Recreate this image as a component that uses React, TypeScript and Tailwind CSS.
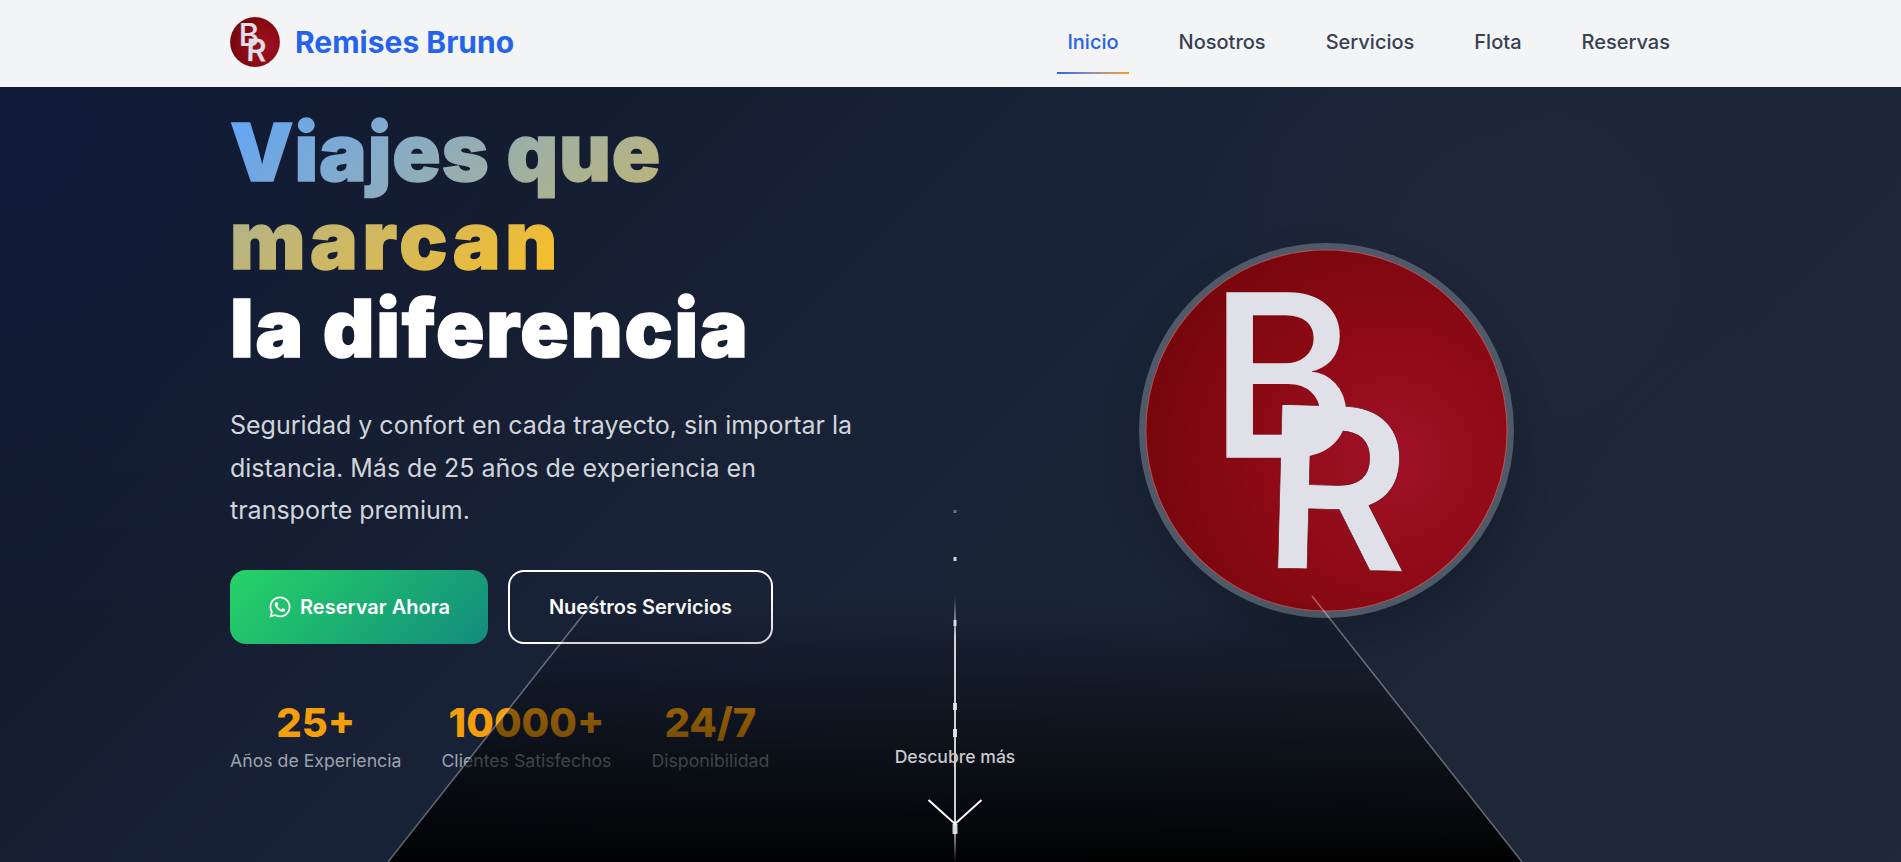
import { FaWhatsapp } from "react-icons/fa";

const links = ["Inicio", "Nosotros", "Servicios", "Flota", "Reservas"];

const stats = [
  { value: "25+", label: "Años de Experiencia" },
  { value: "10000+", label: "Clientes Satisfechos" },
  { value: "24/7", label: "Disponibilidad" },
];

const dashes = [
  { top: "top-[423px]", size: "w-[3px] h-[3px]", tone: "opacity-40" },
  { top: "top-[470px]", size: "w-[3px] h-[4px]", tone: "opacity-90" },
  { top: "top-[533px]", size: "w-[3px] h-[6px]", tone: "opacity-90" },
  { top: "top-[616px]", size: "w-[4px] h-[7px]", tone: "opacity-90" },
  { top: "top-[642px]", size: "w-[4px] h-[8px]", tone: "opacity-90" },
  { top: "top-[737px]", size: "w-[5px] h-[10px]", tone: "opacity-90" },
];

const BrLogo = ({ id }: { id: string }) => (
  <svg viewBox="0 0 100 100" className="block w-full h-full overflow-visible">
    <defs>
      <radialGradient id={id} cx="0.68" cy="0.58" r="0.7">
        <stop offset="0" stopColor="#a11229" />
        <stop offset="0.5" stopColor="#8e0a15" />
        <stop offset="1" stopColor="#76060c" />
      </radialGradient>
    </defs>
    <circle cx="50" cy="50" r="49.8" fill={`url(#${id})`} stroke="#d98892" strokeOpacity="0.55" strokeWidth="0.4" />
    <g fontFamily="Inter, sans-serif" fontSize="62">
      <text transform="translate(32 87.8) rotate(1.5)" fill="#e0e1e8" stroke="#6b1018" strokeWidth="0.2" fontWeight="600">R</text>
      <text transform="translate(17.6 57.3)" fill="#e0e1e8" stroke="#e0e1e8" strokeWidth="0.4" fontWeight="500">B</text>
    </g>
  </svg>
);

export default function App() {
  return (
    <div className="relative flex flex-col h-screen overflow-hidden font-['Inter',sans-serif]">
      <nav className="h-[87px] flex-shrink-0 bg-[#f3f4f6] pb-[3px]">
        <div className="w-[1441px] h-full mx-auto flex items-center justify-between">
          <div className="flex items-center gap-[15px]">
            <div className="w-[50px] h-[50px]">
              <BrLogo id="nav-logo" />
            </div>
            <span className="text-3xl font-bold text-[#2563eb]">Remises Bruno</span>
          </div>
          <ul className="flex gap-[38px] -mr-[10px]">
            {links.map((link, i) => (
              <li key={link} className="relative">
                <a className={`block px-[11px] text-xl font-medium ${i === 0 ? "text-[#2563eb]" : "text-[#374151]"}`}>
                  {link}
                </a>
                {i === 0 && (
                  <span className="absolute left-[1px] right-[1px] top-[44px] h-[2px] bg-gradient-to-r from-[#2563eb] to-[#f59e0b]" />
                )}
              </li>
            ))}
          </ul>
        </div>
      </nav>

      <section className="relative flex-1 bg-[radial-gradient(circle_at_0%_5%,rgba(30,58,180,0.1),transparent_25%),radial-gradient(circle_at_78%_18%,rgba(90,50,90,0.08),transparent_18%),linear-gradient(135deg,#0f172a_0%,#1a2438_50%,#1f2937_100%)]">
        <div className="w-[1441px] mx-auto grid grid-cols-2 gap-16">
          <div className="pt-[21px]">
            <h1 className="text-[80px] leading-[88px] font-black text-white">
              <span className="bg-[linear-gradient(135deg,#60a5fa,#fbbf24)] bg-clip-text text-transparent [-webkit-text-stroke:1.5px_transparent]">
                <span className="tracking-[0.9px]">Viajes que</span>
                <br />
                <span className="tracking-[4.6px]">marcan</span>
              </span>
              <br />
              <span className="tracking-[1.8px] [-webkit-text-stroke:1.5px_#fff]">la diferencia</span>
            </h1>
            <p className="mt-[32px] max-w-[640px] text-[25px] leading-[42.5px] text-[#d1d5db]">
              Seguridad y confort en cada trayecto, sin importar la distancia. Más de 25 años de experiencia en transporte premium.
            </p>
            <div className="mt-[38px] flex gap-5">
              <a className="w-[258px] h-[74px] flex items-center justify-center gap-2 rounded-2xl bg-[linear-gradient(135deg,#25d366,#128c7e)] text-xl font-semibold text-white">
                <FaWhatsapp className="text-[24px]" />
                Reservar Ahora
              </a>
              <a className="w-[265px] h-[74px] flex items-center justify-center rounded-2xl border-2 border-white text-xl font-semibold text-white">
                Nuestros Servicios
              </a>
            </div>
            <div className="mt-[55px] flex gap-10">
              {stats.map((stat) => (
                <div key={stat.label} className="text-center">
                  <div className="text-[40px] leading-[48px] font-extrabold text-[#f59e0b]">{stat.value}</div>
                  <div className="mt-[1px] text-[17.7px] text-[#9ca3af]">{stat.label}</div>
                </div>
              ))}
            </div>
          </div>
          <div className="flex justify-center pt-[156px]">
            <div className="w-[375px] h-[375px] rounded-full border-[6px] border-[#4f5a68] shadow-[0_20px_40px_rgba(0,0,0,0.2)]">
              <BrLogo id="hero-logo" />
            </div>
          </div>
        </div>

        {/* road drawn over the hero content */}
        <svg viewBox="0 0 1901 775" className="absolute inset-0 w-full h-full pointer-events-none">
          <defs>
            <linearGradient id="road" x1="0" y1="0" x2="0" y2="1">
              <stop offset="0" stopColor="#000" stopOpacity="0" />
              <stop offset="1" stopColor="#000" stopOpacity="0.95" />
            </linearGradient>
          </defs>
          <polygon points="598,509 1312,509 1522,775 388,775" fill="url(#road)" />
          <line x1="598" y1="509" x2="388" y2="775" stroke="#fff" strokeOpacity="0.35" strokeWidth="1.5" />
          <line x1="1312" y1="509" x2="1522" y2="775" stroke="#fff" strokeOpacity="0.35" strokeWidth="1.5" />
        </svg>

        <span className="absolute left-[954px] top-[510px] bottom-0 w-[2px] bg-[linear-gradient(to_bottom,transparent,rgba(255,255,255,0.8)_15%,rgba(255,255,255,0.8)_85%,transparent)]" />
        {dashes.map((dash) => (
          <span key={dash.top} className={`absolute left-[955px] -translate-x-1/2 bg-[#e5e7eb] ${dash.top} ${dash.size} ${dash.tone}`} />
        ))}

        <div className="absolute left-[855px] w-[200px] top-[657px] text-center text-[17.6px] font-medium text-[#c8c9cc]">
          Descubre más
        </div>
        <svg viewBox="0 0 56 28" className="absolute left-[927px] top-[712px] w-[56px] h-[28px]">
          <path d="M1.5 1 28 25 54.5 1" fill="none" stroke="#fff" strokeWidth="2" />
        </svg>
      </section>
    </div>
  );
}
